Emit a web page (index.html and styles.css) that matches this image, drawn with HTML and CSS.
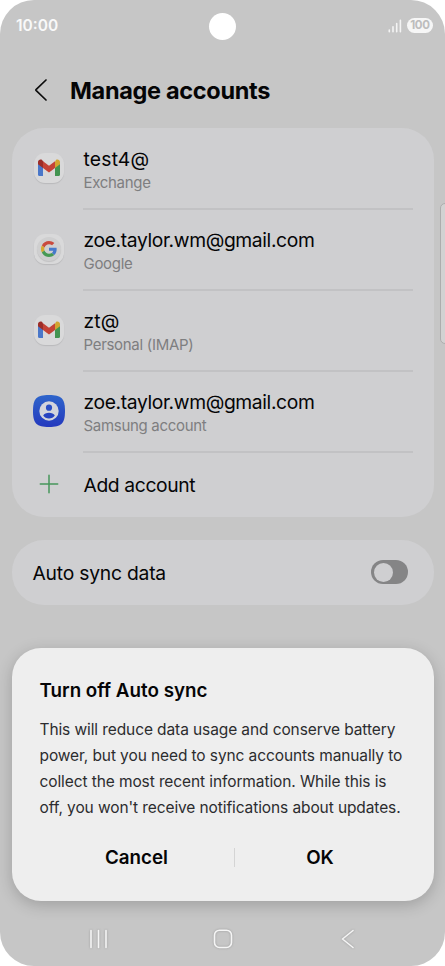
FILE: index.html
```html
<!DOCTYPE html>
<html lang="en">
  <head>
    <meta charset="utf-8" />
    <title>Manage accounts</title>
    <meta name="viewport" content="width=device-width, initial-scale=1" />
    <link rel="stylesheet" href="styles.css">
  </head>

  <body>
    <!-- Shared icon shapes -->
    <svg class="sprite" width="0" height="0">
      <symbol id="gmail" viewBox="0 0 32 32">
        <path d="M5 10v12.500a1.500 1.500 0 0 0 1.500 1.500H10V13.200z" fill="#4a77c9"/>
        <path d="M22 13.200V24h3.500a1.500 1.500 0 0 0 1.500-1.500V10z" fill="#439451"/>
        <path d="M22 10v6l5-3.700v-2.200c0-2.400-2.500-3.400-4.100-2.200z" fill="#d2a530"/>
        <path d="M10 16V9.300l6 4.500 6-4.500V16l-6 4.600z" fill="#c44337"/>
        <path d="M5 10.100v2.200L10 16V9.300L9.100 7.900C7.500 6.700 5 7.700 5 10.100z" fill="#9d2d28"/>
      </symbol>
    </svg>

    <div class="phone">
      <header class="status">
        <span class="time">10:00</span>
        <span class="camera"></span>
        <span class="indicators">
          <svg width="14" height="14" viewBox="0 0 14 14" stroke="#f4f4f4" stroke-width="1.600" stroke-linecap="round">
            <path d="M1.300 11v1.700M5 7.800v4.900M8.700 4.500v8.200M12.400 1.300v11.400"/>
          </svg>
          <span class="battery">100</span>
        </span>
      </header>

      <div class="title-bar">
        <svg width="14" height="24" viewBox="0 0 14 24" fill="none" stroke="#0c0c0c" stroke-width="1.700" stroke-linecap="round" stroke-linejoin="round">
          <path d="M12 2L2 11.600a.6.6 0 0 0 0 .8L12 22"/>
        </svg>
        <h1>Manage accounts</h1>
      </div>

      <main>
        <ul class="card accounts">
          <li class="account">
            <span class="icon app"><svg width="32" height="32"><use href="#gmail"/></svg></span>
            <div class="details">
              <span class="name short">test4@</span>
              <span class="type">Exchange</span>
            </div>
          </li>
          <li class="account">
            <span class="icon app">
              <span class="disc">
                <svg width="16" height="16" viewBox="0 0 48 48">
                  <path fill="#c94a3e" d="M24 9.500c3.500 0 6.700 1.200 9.200 3.600l6.900-6.900C35.900 2.400 30.500 0 24 0 14.600 0 6.500 5.400 2.600 13.200l8 6.200C12.400 13.700 17.700 9.500 24 9.500z"/>
                  <path fill="#4779cb" d="M47 24.600c0-1.600-.2-3.100-.4-4.600H24v9h12.900c-.6 3-2.300 5.500-4.800 7.200l7.700 6C44.400 38 47 31.800 47 24.600z"/>
                  <path fill="#d5aa32" d="M10.500 28.600a14.500 14.500 0 0 1 0-9.200l-8-6.200a24 24 0 0 0 0 21.600z"/>
                  <path fill="#479a55" d="M24 48c6.500 0 11.900-2.100 15.900-5.800l-7.700-6c-2.200 1.500-4.900 2.300-8.200 2.300-6.300 0-11.600-4.200-13.500-9.900l-8 6.200C6.500 42.600 14.600 48 24 48z"/>
                </svg>
              </span>
            </span>
            <div class="details">
              <span class="name">zoe.taylor.wm@gmail.com</span>
              <span class="type">Google</span>
            </div>
          </li>
          <li class="account">
            <span class="icon app"><svg width="32" height="32"><use href="#gmail"/></svg></span>
            <div class="details">
              <span class="name short">zt@</span>
              <span class="type">Personal (IMAP)</span>
            </div>
          </li>
          <li class="account">
            <span class="icon">
              <svg width="32" height="32" viewBox="0 0 32 32">
                <defs>
                  <linearGradient id="blue" x1="0" y1="0" x2="0" y2="1">
                    <stop offset="0" stop-color="#2e65cb"/>
                    <stop offset="1" stop-color="#2439be"/>
                  </linearGradient>
                </defs>
                <path d="M16 0C28.500 0 32 3.500 32 16s-3.500 16-16 16S0 28.500 0 16 3.500 0 16 0z" fill="url(#blue)"/>
                <circle cx="16" cy="16" r="9.700" fill="#d3d5dc"/>
                <circle cx="16" cy="12.700" r="3.100" fill="#2b4fc4"/>
                <path d="M10.200 20.500c1-1.800 3.200-2.800 5.800-2.800s4.800 1 5.800 2.800c-1.200 1.900-3.300 2.900-5.800 2.900s-4.600-1-5.800-2.900z" fill="#2845c1"/>
              </svg>
            </span>
            <div class="details">
              <span class="name">zoe.taylor.wm@gmail.com</span>
              <span class="type">Samsung account</span>
            </div>
          </li>
          <li class="account add">
            <span class="icon">
              <svg width="20" height="20" viewBox="0 0 20 20" stroke="#47975b" stroke-width="1.500" stroke-linecap="round">
                <path d="M10 1.300v17.400M1.300 10h17.400"/>
              </svg>
            </span>
            <div class="details">
              <span class="name">Add account</span>
            </div>
          </li>
        </ul>

        <div class="card sync">
          <span class="name">Auto sync data</span>
          <span class="toggle"></span>
        </div>
      </main>

      <section class="dialog">
        <h2>Turn off Auto sync</h2>
        <p>
          This will reduce data usage and conserve battery<br>
          power, but you need to sync accounts manually to<br>
          collect the most recent information. While this is<br>
          off, you won't receive notifications about updates.
        </p>
        <div class="actions">
          <button type="button">Cancel</button>
          <button type="button">OK</button>
        </div>
      </section>

      <nav class="nav">
        <svg width="20" height="20" viewBox="0 0 20 20">
          <path d="M2 1.500v17M9.500 1.500v17M17 1.500v17"/>
        </svg>
        <svg width="20" height="20" viewBox="0 0 20 20">
          <rect x="1.500" y="1.200" width="17" height="17.300" rx="5"/>
        </svg>
        <svg width="20" height="20" viewBox="0 0 20 20">
          <path d="M16 1.500L5.500 10 16 18.500"/>
        </svg>
      </nav>

      <span class="edge-panel"></span>
    </div>
  </body>
</html>
```
FILE: styles.css
```css
* {
    box-sizing: border-box;
}

body {
    margin: 0;
    background-color: #fff;
    font-family: Inter, Roboto, sans-serif;
    color: #050506;
}

h1, h2, p, ul {
    margin: 0;
    padding: 0;
}

svg {
    flex: none;
}

.sprite {
    position: absolute;
}

.phone {
    position: relative;
    display: flex;
    flex-direction: column;
    width: 445px;
    height: 966px;
    overflow: hidden;
    border-radius: 34px;
    background-color: #c6c6c6;
}

/* Status bar */
.status {
    display: grid;
    grid-template-columns: 1fr 28px 1fr;
    align-items: center;
    height: 51px;
    padding: 0 12px 0 16px;
    color: #f9f9f9;
}

.time {
    font-size: 15.500px;
    font-weight: 600;
}

.camera {
    width: 27px;
    height: 27px;
    margin: 1px 0 0 -2px;
    border-radius: 50%;
    background-color: #fff;
}

.indicators {
    display: flex;
    align-items: center;
    justify-content: flex-end;
    gap: 5px;
}

.battery {
    width: 26px;
    border-radius: 8px;
    background-color: #f6f6f6;
    color: #bdbdbd;
    font-size: 11.500px;
    font-weight: 700;
    letter-spacing: -0.3px;
    line-height: 15px;
    text-align: center;
}

.title-bar {
    display: flex;
    align-items: center;
    gap: 22px;
    height: 76.500px;
    padding: 3px 34px 0;
}

.title-bar svg {
    margin-bottom: 1px;
}

h1 {
    font-size: 23.500px;
    font-weight: 700;
    letter-spacing: -0.32px;
    white-space: nowrap;
}

/* Settings cards */
main {
    padding: 0 11.500px;
}

.card {
    border-radius: 32px;
    background-color: #cfcfd1;
}

.accounts {
    height: 389px;
    padding: 0 21px;
    list-style: none;
}

.account {
    display: flex;
    align-items: center;
    gap: 18px;
    height: 81px;
}

.icon {
    display: flex;
    flex: none;
    align-items: center;
    justify-content: center;
    width: 32px;
    height: 32px;
}

.app {
    width: 30px;
    height: 30px;
    margin: -1px 1px 0;
    border-radius: 11px;
    background-color: #d9d9da;
    box-shadow: 0 1px 1px #b9b9bb;
}

.disc {
    display: flex;
    align-items: center;
    justify-content: center;
    width: 24px;
    height: 24px;
    border-radius: 50%;
    background-color: #cfcfd0;
    box-shadow: 0 1px 1px #c0c0c1;
}

.details {
    display: flex;
    flex: 1;
    flex-direction: column;
    justify-content: center;
    height: 81px;
    margin-top: 3px;
    padding: 2px 0 0 1px;
    border-bottom: 2px solid #c2c2c4;
}

.name {
    font-size: 19.300px;
    letter-spacing: -0.38px;
    line-height: 26px;
    white-space: nowrap;
}

.short {
    letter-spacing: 0.2px;
}

.type {
    color: #7e7e80;
    font-size: 15px;
    letter-spacing: -0.3px;
    line-height: 22px;
}

.add {
    height: 65px;
}

.add .details {
    height: 65px;
    margin-top: 0;
    padding-top: 1px;
    border: none;
}

.sync {
    display: flex;
    align-items: center;
    justify-content: space-between;
    height: 65px;
    margin-top: 23px;
    padding: 0 25.500px 0 21px;
}

.sync .name {
    margin-top: 1px;
    letter-spacing: -0.22px;
}

.toggle {
    width: 37px;
    height: 24px;
    padding: 2.500px;
    border-radius: 12px;
    background-color: #858586;
}

.toggle::before {
    content: "";
    display: block;
    width: 19px;
    height: 19px;
    border-radius: 50%;
    background-color: #cfcfd1;
}

/* Confirmation */
.dialog {
    height: 253px;
    margin: 43px 11.500px 0;
    padding: 29px 28px 0;
    border-radius: 29px;
    background-color: #eee;
    box-shadow: 0 4px 16px rgba(0, 0, 0, 0.2);
}

h2 {
    font-size: 18.800px;
    font-weight: 600;
    line-height: 28px;
}

p {
    margin-top: 12px;
    color: #2c2c2e;
    font-size: 15.500px;
    letter-spacing: -0.1px;
    line-height: 26px;
    white-space: nowrap;
}

.actions {
    display: flex;
    align-items: center;
    margin-top: 27px;
}

button {
    width: 194px;
    height: 19px;
    padding: 0;
    border: none;
    background-color: transparent;
    color: #050506;
    font: 600 18.800px/19px Inter, Roboto, sans-serif;
}

button + button {
    width: 172px;
    border-left: 1px solid #d4d4d4;
}

/* System navigation */
.nav {
    display: flex;
    align-items: center;
    justify-content: space-between;
    height: 65px;
    padding: 11px 88px 0 89px;
}

.nav svg {
    fill: none;
    stroke: #f5f5f5;
    stroke-width: 1.600;
    stroke-linecap: round;
    stroke-linejoin: round;
    filter: drop-shadow(0 0 1px #999);
}

.edge-panel {
    position: absolute;
    top: 203px;
    right: -6px;
    width: 11px;
    height: 141px;
    border: 1px solid #adadad;
    border-radius: 5px;
    background-color: #d2d2d2;
}
```
